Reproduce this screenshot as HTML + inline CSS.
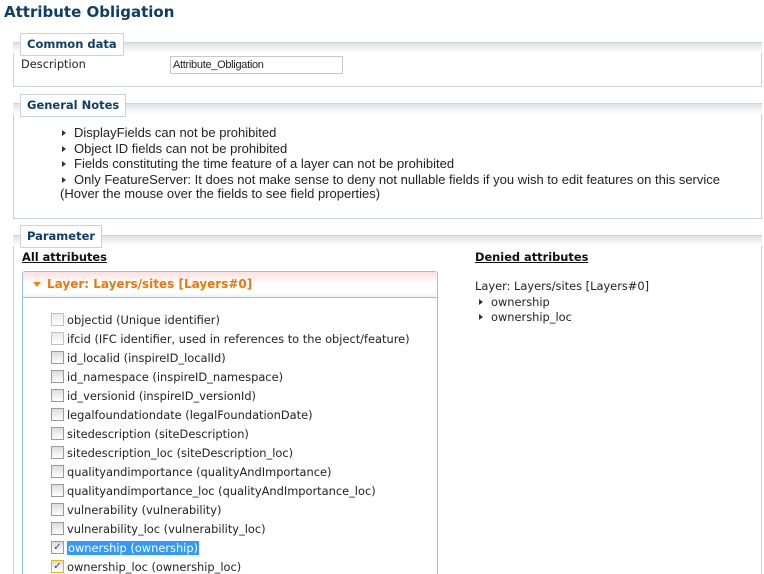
<!DOCTYPE html>
<html><head><style>
html,body{margin:0;width:764px;height:574px;overflow:hidden}
body{background:#fff;font-family:"DejaVu Sans","Liberation Sans",sans-serif;font-size:11.4px;color:#222;position:relative}
.a{position:absolute;white-space:nowrap}
h1{position:absolute;left:4px;top:3px;margin:0;font-size:15px;color:#0e3d66;font-weight:bold}
.fs{position:absolute;left:13px;right:2px;border:1px solid #c9d1d9;border-top:none;background:#fff}
.fs .bar{position:absolute;left:-1px;right:-1px;top:0;height:10px;background:linear-gradient(#dfe2e6,#fff);border-top:1px solid #c9d1d9}
.lg{position:absolute;left:20px;background:#fff;border:1px solid #c9d1d9;color:#0e3d66;font-weight:bold;font-size:11.5px;padding:3px 6px;height:15px}
.nt{font-family:"Liberation Sans",sans-serif;font-size:13px;color:#222}
.tri{display:inline-block;width:0;height:0;border-left:4px solid #333;border-top:3.5px solid transparent;border-bottom:3.5px solid transparent;margin-right:8px;vertical-align:1px}
.cb{position:absolute;left:51px;width:11px;height:11px;border:1px solid #9a9a9a;background:linear-gradient(#dcdcdc,#fff)}
.row{position:absolute;left:67px;color:#222}
</style></head><body>
<h1>Attribute Obligation</h1>

<div class="fs" style="top:42px;height:44px"><div class="bar"></div></div>
<div class="lg" style="top:33px">Common data</div>
<div class="a" style="left:21px;top:57px">Description</div>
<div class="a" style="left:170px;top:56px;width:173px;height:18px;border:1px solid #c8c8c8;box-sizing:border-box;font-family:'Liberation Sans',sans-serif;font-size:11px;padding:2px 2px;letter-spacing:-0.3px">Attribute_Obligation</div>

<div class="fs" style="top:103px;height:115px"><div class="bar"></div></div>
<div class="lg" style="top:94px">General Notes</div>
<div class="a nt" style="left:62px;top:125px"><span class="tri"></span>DisplayFields can not be prohibited</div>
<div class="a nt" style="left:62px;top:141px"><span class="tri"></span>Object ID fields can not be prohibited</div>
<div class="a nt" style="left:62px;top:156px"><span class="tri"></span>Fields constituting the time feature of a layer can not be prohibited</div>
<div class="a nt" style="left:62px;top:172px"><span class="tri"></span>Only FeatureServer: It does not make sense to deny not nullable fields if you wish to edit features on this service</div>
<div class="a nt" style="left:60px;top:186px">(Hover the mouse over the fields to see field properties)</div>

<div class="fs" style="top:235px;height:345px"><div class="bar"></div></div>
<div class="lg" style="top:225px">Parameter</div>
<div class="a" style="left:22px;top:250px;font-weight:bold;text-decoration:underline;color:#111">All attributes</div>
<div class="a" style="left:475px;top:250px;font-weight:bold;text-decoration:underline;color:#111">Denied attributes</div>
<div class="a" style="left:475px;top:279px">Layer: Layers/sites [Layers#0]</div>
<div class="a" style="left:479px;top:295px"><span class="tri"></span>ownership</div>
<div class="a" style="left:479px;top:310px"><span class="tri"></span>ownership_loc</div>

<div class="a" style="left:22px;top:271px;width:414px;height:310px;border:1px solid #9cc0e0;border-radius:3px;background:#fff"></div>
<div class="a" style="left:23px;top:272px;width:414px;height:25px;background:linear-gradient(#fbe0e0,#fff 45%,#fff 80%,#eef4f6);border-bottom:1px solid #9cc0e0"></div>
<div class="a" style="left:33px;top:282px;width:0;height:0;border-top:5px solid #e8870c;border-left:4px solid transparent;border-right:4px solid transparent"></div>
<div class="a" style="left:47px;top:277px;color:#e8780c;font-weight:bold;font-size:12px">Layer: Layers/sites [Layers#0]</div>

<div class="cb" style="top:313px;opacity:.6"></div><div class="row" style="top:313px">objectid (Unique identifier)</div>
<div class="cb" style="top:332px;opacity:.6"></div><div class="row" style="top:332px">ifcid (IFC identifier, used in references to the object/feature)</div>
<div class="cb" style="top:351px"></div><div class="row" style="top:351px">id_localid (inspireID_localId)</div>
<div class="cb" style="top:370px"></div><div class="row" style="top:370px">id_namespace (inspireID_namespace)</div>
<div class="cb" style="top:389px"></div><div class="row" style="top:389px">id_versionid (inspireID_versionId)</div>
<div class="cb" style="top:408px"></div><div class="row" style="top:408px">legalfoundationdate (legalFoundationDate)</div>
<div class="cb" style="top:427px"></div><div class="row" style="top:427px">sitedescription (siteDescription)</div>
<div class="cb" style="top:446px"></div><div class="row" style="top:446px">sitedescription_loc (siteDescription_loc)</div>
<div class="cb" style="top:465px"></div><div class="row" style="top:465px">qualityandimportance (qualityAndImportance)</div>
<div class="cb" style="top:484px"></div><div class="row" style="top:484px">qualityandimportance_loc (qualityAndImportance_loc)</div>
<div class="cb" style="top:503px"></div><div class="row" style="top:503px">vulnerability (vulnerability)</div>
<div class="cb" style="top:522px"></div><div class="row" style="top:522px">vulnerability_loc (vulnerability_loc)</div>
<div class="cb" style="top:541px;font-size:10px;line-height:11px;text-align:center;color:#2a3f8a">✓</div><div class="row" style="top:541px;background:#3399ff;color:#fff;padding:0 1px;left:67px">ownership (ownership)</div>
<div class="cb" style="top:560px;border-color:#e0b800;font-size:10px;line-height:11px;text-align:center;color:#2a3f8a">✓</div><div class="row" style="top:560px">ownership_loc (ownership_loc)</div>
</body></html>
